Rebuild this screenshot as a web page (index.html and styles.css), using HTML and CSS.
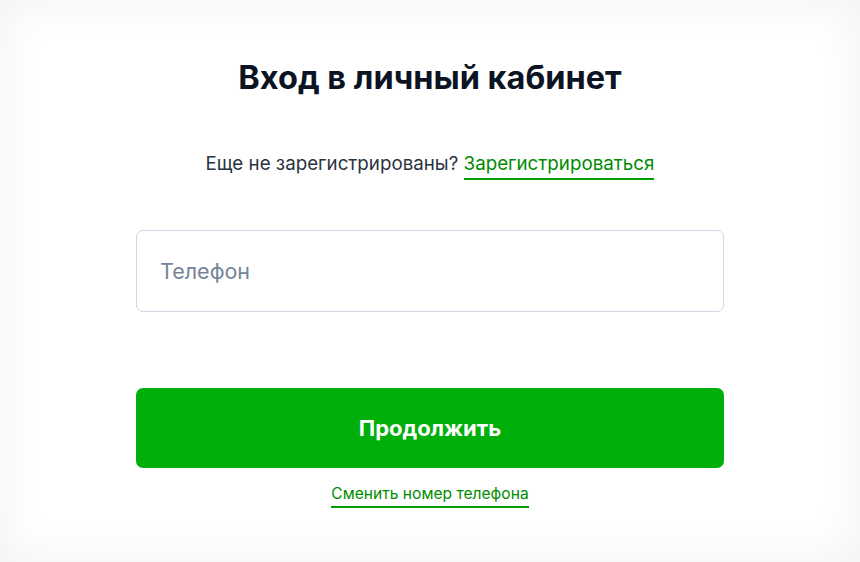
FILE: index.html
```html
<!DOCTYPE html>
<html lang="ru">
<head>
<meta charset="utf-8">
<link rel="stylesheet" href="styles.css">
</head>
<body>
<div class="page">
  <div class="card">
    <h1 class="title">Вход в личный кабинет</h1>
    <p class="register">Еще не зарегистрированы? <a class="link" href="#">Зарегистрироваться</a></p>
    <form class="form">
      <input class="input" type="text" placeholder="Телефон">
      <button class="btn" type="button">Продолжить</button>
      <a class="link small" href="#">Сменить номер телефона</a>
    </form>
  </div>
</div>
</body>
</html>
```
FILE: styles.css
```css
* { box-sizing: border-box; }
html, body { margin: 0; padding: 0; }
body {
  background: #ffffff;
  font-family: Inter, "Noto Sans", sans-serif;
  width: 860px;
  height: 562px;
  overflow: hidden;
}
.page {
  width: 860px;
  height: 562px;
  box-shadow: inset 0 0 45px 4px rgba(0, 0, 0, 0.05);
}
.card {
  display: flex;
  flex-direction: column;
  align-items: center;
  padding-top: 56px;
}
.title {
  margin: 0;
  font-size: 32.5px;
  line-height: 44px;
  font-weight: 700;
  color: #0c1423;
}
.register {
  margin: 51px 0 0;
  font-size: 18.75px;
  line-height: 26px;
  color: #2a3342;
}
.link {
  color: #008c00;
  text-decoration: none;
  border-bottom: 2px solid #00a000;
  padding-bottom: 3px;
}
.form {
  width: 588px;
  margin-top: 53px;
  display: flex;
  flex-direction: column;
  align-items: center;
}
.input {
  width: 100%;
  height: 82px;
  border: 1px solid #cfd8e4;
  border-radius: 7px;
  padding: 0 23px;
  font-family: inherit;
  font-size: 21.5px;
  color: #1b2330;
  outline: none;
}
.input::placeholder { color: #76849a; }
.btn {
  margin-top: 76px;
  width: 100%;
  height: 80px;
  border: none;
  border-radius: 7px;
  background: #00af0a;
  color: #fff;
  font-family: inherit;
  font-size: 22px;
  font-weight: 700;
  cursor: pointer;
}
.small {
  margin-top: 16px;
  font-size: 15.6px;
  line-height: 20px;
  padding-bottom: 2px;
}
```
